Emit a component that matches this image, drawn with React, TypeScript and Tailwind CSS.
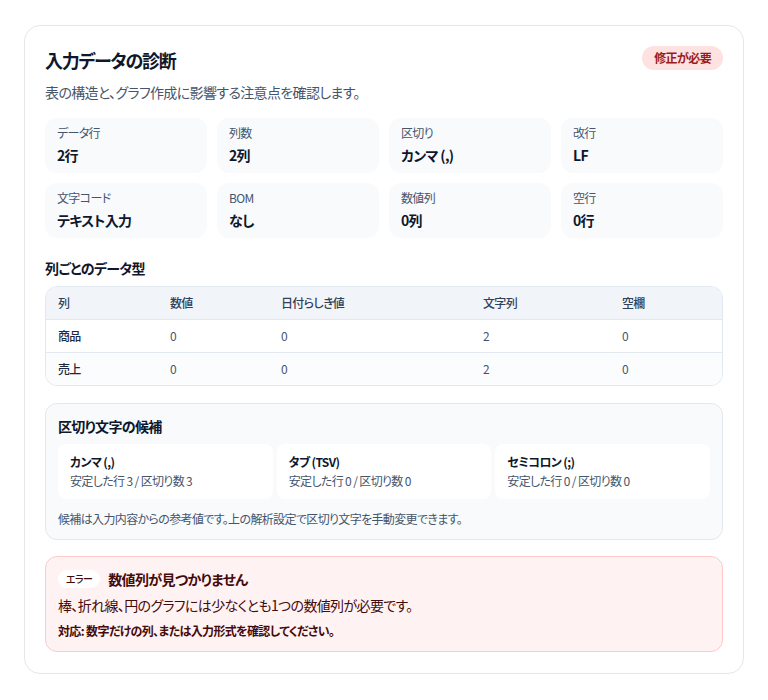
import React from 'react'

const stats = [
  { label: 'データ行', value: '2行' },
  { label: '列数', value: '2列' },
  { label: '区切り', value: 'カンマ (,)' },
  { label: '改行', value: 'LF' },
  { label: '文字コード', value: 'テキスト入力' },
  { label: 'BOM', value: 'なし' },
  { label: '数値列', value: '0列' },
  { label: '空行', value: '0行' },
]

const rows = [
  { name: '商品', num: 0, date: 0, str: 2, empty: 0 },
  { name: '売上', num: 0, date: 0, str: 2, empty: 0 },
]

const candidates = [
  { name: 'カンマ (,)', stable: 3, count: 3 },
  { name: 'タブ (TSV)', stable: 0, count: 0 },
  { name: 'セミコロン (;)', stable: 0, count: 0 },
]

export default function App() {
  return (
    <div className="min-h-[700px] bg-white p-6 pt-[25px] font-['Noto_Sans_CJK_JP','Noto_Sans',sans-serif] tracking-[-0.04em] text-slate-900 [font-feature-settings:'palt']">
      <div className="rounded-2xl border border-gray-200 bg-white px-5 pt-5 pb-[21px]">
        {/* Header */}
        <div className="flex items-start justify-between">
          <h2 className="text-lg font-bold leading-7 tracking-[-0.07em]">入力データの診断</h2>
          <span className="rounded-full bg-[#fee2e2] px-3 py-[3px] text-xs font-bold leading-[18px] text-[#991b1b]">
            修正が必要
          </span>
        </div>
        <p className="mt-2 text-sm text-slate-600">表の構造と、グラフ作成に影響する注意点を確認します。</p>

        {/* Stats */}
        <div className="mt-4 grid grid-cols-4 gap-2.5">
          {stats.map((s) => (
            <div key={s.label} className="rounded-xl bg-[#f8fafc] px-3 pt-[7px] pb-2">
              <div className="text-xs leading-4 text-slate-600">{s.label}</div>
              <div className="mt-1 text-sm font-bold leading-5">{s.value}</div>
            </div>
          ))}
        </div>

        {/* Column types */}
        <h3 className="mt-5 text-sm font-bold leading-5">列ごとのデータ型</h3>
        <div className="mt-2 overflow-hidden rounded-xl border border-slate-200">
          <table className="w-full table-fixed text-left text-xs">
            <thead className="bg-[#f1f5f9]">
              <tr>
                <th className="w-[112px] px-3 py-2 font-medium leading-4 text-slate-700">列</th>
                <th className="w-[111px] px-3 py-2 font-medium leading-4 text-slate-700">数値</th>
                <th className="w-[202px] px-3 py-2 font-medium leading-4 text-slate-700">日付らしき値</th>
                <th className="w-[139px] px-3 py-2 font-medium leading-4 text-slate-700">文字列</th>
                <th className="px-3 py-2 font-medium leading-4 text-slate-700">空欄</th>
              </tr>
            </thead>
            <tbody>
              {rows.map((r, i) => (
                <tr key={r.name} className={'border-t border-slate-200 ' + (i === 1 ? 'bg-[#fbfcfd]' : 'bg-white')}>
                  <td className="px-3 py-2 font-medium leading-4 text-slate-800">{r.name}</td>
                  <td className="px-3 py-2 leading-4 text-slate-600">{r.num}</td>
                  <td className="px-3 py-2 leading-4 text-slate-600">{r.date}</td>
                  <td className="px-3 py-2 leading-4 text-slate-600">{r.str}</td>
                  <td className="px-3 py-2 leading-4 text-slate-600">{r.empty}</td>
                </tr>
              ))}
            </tbody>
          </table>
        </div>

        {/* Delimiter candidates */}
        <div className="mt-[17px] rounded-xl border border-slate-200 bg-[#f8fafc] px-3 pt-3 pb-3">
          <h3 className="text-sm font-bold leading-5">区切り文字の候補</h3>
          <div className="mt-2 grid grid-cols-3 gap-1">
            {candidates.map((c) => (
              <div key={c.name} className="rounded-lg bg-white px-3 py-2.5">
                <div className="text-xs font-bold leading-4">{c.name}</div>
                <div className="mt-[3px] text-xs leading-4 text-slate-600">
                  安定した行 {c.stable} / 区切り数 {c.count}
                </div>
              </div>
            ))}
          </div>
          <p className="mt-3 text-xs leading-4 text-slate-600">
            候補は入力内容からの参考値です。上の解析設定で区切り文字を手動変更できます。
          </p>
        </div>

        {/* Error */}
        <div className="mt-4 rounded-xl border border-[#fecaca] bg-[#fef2f2] px-3 pt-3 pb-3 text-[#450a0a]">
          <div className="flex items-center gap-2">
            <span className="rounded-full bg-white px-2 py-0.5 text-[10px] font-medium leading-[14px]">エラー</span>
            <span className="text-sm font-bold leading-5">数値列が見つかりません</span>
          </div>
          <p className="mt-1.5 text-sm leading-5">棒、折れ線、円のグラフには少なくとも1つの数値列が必要です。</p>
          <p className="mt-2 text-xs font-bold leading-4">対応: 数字だけの列、または入力形式を確認してください。</p>
        </div>
      </div>
    </div>
  )
}
